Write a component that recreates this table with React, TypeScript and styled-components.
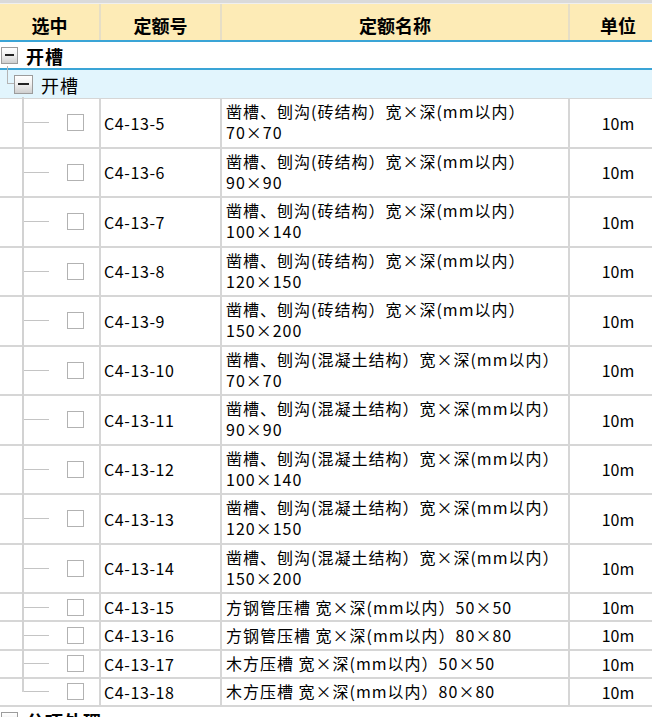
import React from "react";
import styled, { createGlobalStyle, css } from "styled-components";

const GlobalStyle = createGlobalStyle`
  html, body { margin: 0; padding: 0; background: #ffffff; overflow: hidden; }
  body { font-family: "Noto Sans CJK SC", "Noto Sans", sans-serif; color: #000; }
`;

const COLS = "101px 121px 348px 96px";
const GRID_LINE = "#d6d6d6";
const BLUE = "#3aa4d6";

const Page = styled.div`
  width: 652px;
  height: 717px;
  overflow: hidden;
`;

const Table = styled.div`
  width: 666px;
  display: flex;
  flex-direction: column;
`;

const TopStrip = styled.div`
  height: 4px;
  background: #dadada;
  border-bottom: 1px solid #efefef;
  box-sizing: border-box;
`;

const HeaderRow = styled.div`
  display: grid;
  grid-template-columns: ${COLS};
  height: 38px;
  background: #fdebb6;
  border-bottom: 2px solid ${BLUE};
  box-sizing: border-box;
`;

const HeaderCell = styled.div<{ $last?: boolean }>`
  display: flex;
  align-items: center;
  justify-content: center;
  padding-top: 5px;
  font-size: 18px;
  font-weight: 700;
  border-right: ${(p) => (p.$last ? "none" : "2px solid #e6dec6")};
  box-sizing: border-box;
`;

const GroupRow = styled.div<{ $level: number }>`
  position: relative;
  display: flex;
  align-items: center;
  box-sizing: border-box;
  ${(p) =>
    p.$level === 1
      ? css`
          height: 28px;
          background: #ffffff;
          border-bottom: 2px solid ${BLUE};
          padding-left: 1px;
          gap: 8px;
          font-weight: 700;
        `
      : css`
          height: 29px;
          background: #e2f5fd;
          border-bottom: 1px solid ${GRID_LINE};
          padding-left: 14px;
          gap: 8px;
          font-weight: 400;
        `}
`;

const GroupLabel = styled.span`
  font-size: 18px;
  line-height: 20px;
  padding-top: 2px;
  letter-spacing: 1px;
`;

const ExpandBox = styled.span<{ $size: number }>`
  position: relative;
  z-index: 1;
  width: ${(p) => p.$size}px;
  height: ${(p) => p.$size}px;
  box-sizing: border-box;
  border: 1.5px solid #9c9c9c;
  background: linear-gradient(#ffffff 0%, #f1f1f1 45%, #cfcfcf 100%);
  display: flex;
  align-items: center;
  justify-content: center;
  flex: none;
  &::after {
    content: "";
    width: ${(p) => p.$size - 8}px;
    height: 2px;
    background: #222;
  }
`;

const Connector = styled.span`
  position: absolute;
  left: 7px;
  top: -4px;
  width: 8px;
  height: 17px;
  border-left: 1px solid #b4b4b4;
  border-bottom: 1px solid #b4b4b4;
`;

const DataRow = styled.div<{ $tall: boolean }>`
  display: grid;
  grid-template-columns: ${COLS};
  height: ${(p) => (p.$tall ? "49.5px" : "28.25px")};
  border-bottom: 2px solid ${GRID_LINE};
  box-sizing: border-box;
  font-size: 16px;
`;

const TreeCell = styled.div<{ $last: boolean }>`
  position: relative;
  display: flex;
  align-items: center;
  border-right: 2px solid ${GRID_LINE};
  &::before {
    content: "";
    position: absolute;
    left: 22px;
    top: -2px;
    width: 2px;
    height: ${(p) => (p.$last ? "calc(50% + 2px)" : "calc(100% + 2px)")};
    background: #d2d2d2;
  }
`;

const Branch = styled.span`
  width: 25px;
  margin-left: 24px;
  border-top: 1px solid #c4c4c4;
  flex: none;
`;

const CheckBox = styled.span`
  width: 17px;
  height: 17px;
  margin-left: 18px;
  box-sizing: border-box;
  border: 1.5px solid #b2b2b2;
  background: #fff;
  flex: none;
`;

const CodeCell = styled.div`
  display: flex;
  align-items: center;
  padding-left: 3px;
  border-right: 2px solid ${GRID_LINE};
  letter-spacing: 0.6px;
`;

const NameCell = styled.div<{ $tall: boolean }>`
  display: flex;
  flex-direction: column;
  justify-content: ${(p) => (p.$tall ? "flex-start" : "center")};
  padding: ${(p) => (p.$tall ? "2px 0 0 4px" : "0 0 0 4px")};
  border-right: 2px solid ${GRID_LINE};
  line-height: 21px;
  letter-spacing: 1px;
  white-space: nowrap;
  overflow: hidden;
`;

const NameLine = styled.span`
  display: block;
`;

const UnitCell = styled.div`
  display: flex;
  align-items: center;
  justify-content: center;
`;

type Item = { code: string; name: string; size?: string };

const brick = "凿槽、刨沟(砖结构）宽×深(mm以内）";
const concrete = "凿槽、刨沟(混凝土结构）宽×深(mm以内）";
const sizes = ["70×70", "90×90", "100×140", "120×150", "150×200"];

const items: Item[] = [
  ...sizes.map((s, i) => ({ code: `C4-13-${5 + i}`, name: brick, size: s })),
  ...sizes.map((s, i) => ({ code: `C4-13-${10 + i}`, name: concrete, size: s })),
  { code: "C4-13-15", name: "方钢管压槽 宽×深(mm以内）50×50" },
  { code: "C4-13-16", name: "方钢管压槽 宽×深(mm以内）80×80" },
  { code: "C4-13-17", name: "木方压槽 宽×深(mm以内）50×50" },
  { code: "C4-13-18", name: "木方压槽 宽×深(mm以内）80×80" },
];

export default function App() {
  return (
    <Page>
      <GlobalStyle />
      <Table>
        <TopStrip />
        <HeaderRow>
          <HeaderCell>选中</HeaderCell>
          <HeaderCell>定额号</HeaderCell>
          <HeaderCell>定额名称</HeaderCell>
          <HeaderCell $last>单位</HeaderCell>
        </HeaderRow>
        <GroupRow $level={1}>
          <ExpandBox $size={17} />
          <GroupLabel>开槽</GroupLabel>
        </GroupRow>
        <GroupRow $level={2}>
          <Connector />
          <ExpandBox $size={19} />
          <GroupLabel>开槽</GroupLabel>
        </GroupRow>
        {items.map((it, i) => {
          const tall = !!it.size;
          return (
            <DataRow key={it.code} $tall={tall}>
              <TreeCell $last={i === items.length - 1}>
                <Branch />
                <CheckBox />
              </TreeCell>
              <CodeCell>{it.code}</CodeCell>
              <NameCell $tall={tall}>
                <NameLine>{it.name}</NameLine>
                {it.size && <NameLine>{it.size}</NameLine>}
              </NameCell>
              <UnitCell>10m</UnitCell>
            </DataRow>
          );
        })}
        <GroupRow $level={1}>
          <ExpandBox $size={17} />
          <GroupLabel>分项处理</GroupLabel>
        </GroupRow>
      </Table>
    </Page>
  );
}
